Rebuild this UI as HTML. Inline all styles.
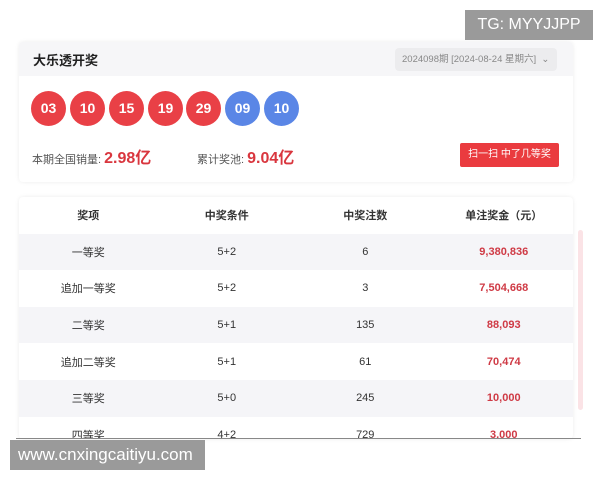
<!DOCTYPE html>
<html><head><meta charset="utf-8"><style>
*{margin:0;padding:0;box-sizing:border-box}
body{width:600px;height:480px;background:#fff;position:relative;overflow:hidden;font-family:"Liberation Sans","Noto Sans CJK SC",sans-serif;color:#333}
.card{position:absolute;left:19px;width:554px;background:#fff;border-radius:4px;box-shadow:0 0 4px rgba(0,0,0,.08)}
.hd{height:34px;background:#f6f6f8;border-radius:4px 4px 0 0;position:relative}
.hd b{position:absolute;left:14px;top:8px;font-size:13px;color:#222}
.sel{position:absolute;left:376px;top:6px;width:162px;height:23px;background:#ececee;border-radius:4px;font-size:9.5px;color:#888;line-height:23px;padding-left:7px}
.ball{position:absolute;top:91px;width:35px;height:35px;border-radius:50%;color:#fff;font-weight:bold;font-size:14px;text-align:center;line-height:35px}
.r{background:#e94046}.b{background:#5a86e6}
.st{position:absolute;top:144px;font-size:11px;color:#555}
.st span{color:#d9363e;font-weight:bold;font-size:16px}
.btn{position:absolute;left:460px;top:143px;width:99px;height:24px;background:#ea3b3f;border-radius:2px;color:#fff;font-size:10px;text-align:center;line-height:24px}
table{border-collapse:collapse;width:554px;font-size:11px}
td,th{height:36.6px;text-align:center;width:25%}
th{font-weight:bold;color:#333}
tr:nth-child(even){background:#f5f5f8}
td.m{color:#cf3a45;font-weight:bold}
.wm{position:absolute;background:#9a9a9a;color:#fff}
</style></head><body>
<div class="card" style="top:42px;height:140px">
<div class="hd"><b>大乐透开奖</b><div class="sel">2024098期 [2024-08-24 星期六] &nbsp;⌄</div></div>
</div>
<div class="ball r" style="left:31px">03</div>
<div class="ball r" style="left:70px">10</div>
<div class="ball r" style="left:109px">15</div>
<div class="ball r" style="left:148px">19</div>
<div class="ball r" style="left:186px">29</div>
<div class="ball b" style="left:225px">09</div>
<div class="ball b" style="left:264px">10</div>
<div class="st" style="left:32px">本期全国销量: <span>2.98亿</span></div>
<div class="st" style="left:197px">累计奖池: <span>9.04亿</span></div>
<div class="btn">扫一扫 中了几等奖</div>
<div class="card" style="top:197px;height:242px;overflow:hidden">
<table>
<tr><th>奖项</th><th>中奖条件</th><th>中奖注数</th><th>单注奖金（元）</th></tr>
<tr><td>一等奖</td><td>5+2</td><td>6</td><td class="m">9,380,836</td></tr>
<tr><td>追加一等奖</td><td>5+2</td><td>3</td><td class="m">7,504,668</td></tr>
<tr><td>二等奖</td><td>5+1</td><td>135</td><td class="m">88,093</td></tr>
<tr><td>追加二等奖</td><td>5+1</td><td>61</td><td class="m">70,474</td></tr>
<tr><td>三等奖</td><td>5+0</td><td>245</td><td class="m">10,000</td></tr>
<tr><td>四等奖</td><td>4+2</td><td>729</td><td class="m">3,000</td></tr>
</table></div>
<div style="position:absolute;left:16px;top:438px;width:565px;height:1px;background:#888"></div>
<div style="position:absolute;left:578px;top:230px;width:5px;height:180px;background:#fbe3e6;border-radius:3px"></div>
<div class="wm" style="left:465px;top:10px;width:128px;height:30px;font-size:16px;line-height:30px;text-align:center">TG: MYYJJPP</div>
<div class="wm" style="left:10px;top:440px;width:195px;height:30px;font-size:17px;line-height:30px;padding-left:8px">www.cnxingcaitiyu.com</div>
</body></html>
